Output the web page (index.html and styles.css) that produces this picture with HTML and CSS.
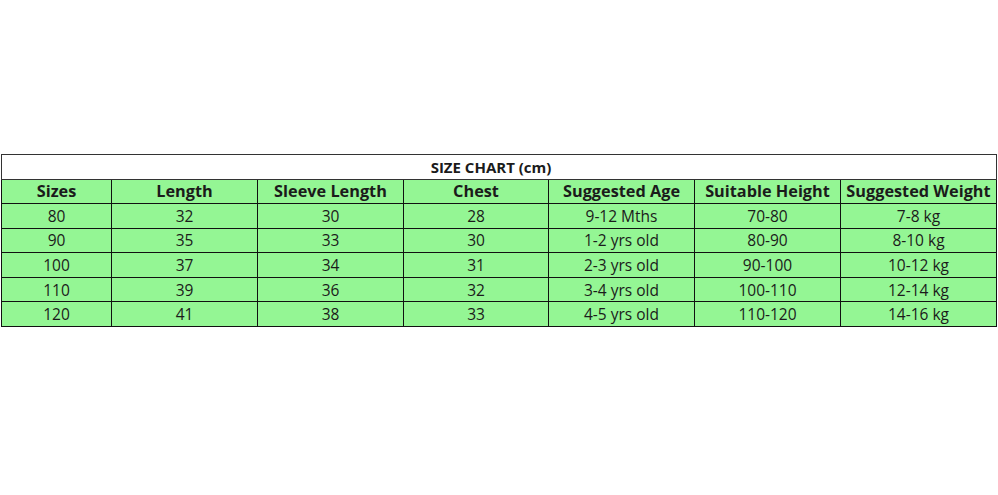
FILE: index.html
```html
<!DOCTYPE html>
<html>
<head>
<meta charset="utf-8">
<link rel="stylesheet" href="styles.css">
</head>
<body>
<div class="page">
<table class="chart">
<colgroup>
<col class="c1"><col class="c2"><col class="c3"><col class="c4"><col class="c5"><col class="c6"><col class="c7">
</colgroup>
<tr class="title"><td colspan="7">SIZE CHART (cm)</td></tr>
<tr class="head"><th>Sizes</th><th>Length</th><th>Sleeve Length</th><th>Chest</th><th>Suggested Age</th><th>Suitable Height</th><th>Suggested Weight</th></tr>
<tr><td>80</td><td>32</td><td>30</td><td>28</td><td>9-12 Mths</td><td>70-80</td><td>7-8 kg</td></tr>
<tr><td>90</td><td>35</td><td>33</td><td>30</td><td>1-2 yrs old</td><td>80-90</td><td>8-10 kg</td></tr>
<tr><td>100</td><td>37</td><td>34</td><td>31</td><td>2-3 yrs old</td><td>90-100</td><td>10-12 kg</td></tr>
<tr><td>110</td><td>39</td><td>36</td><td>32</td><td>3-4 yrs old</td><td>100-110</td><td>12-14 kg</td></tr>
<tr><td>120</td><td>41</td><td>38</td><td>33</td><td>4-5 yrs old</td><td>110-120</td><td>14-16 kg</td></tr>
</table>
</div>
</body>
</html>
```
FILE: styles.css
```css
html, body {
  margin: 0;
  padding: 0;
  background: #ffffff;
}
.page {
  width: 998px;
  height: 495px;
  padding-top: 154px;
  padding-left: 1px;
  box-sizing: border-box;
}
.chart {
  border-collapse: collapse;
  table-layout: fixed;
  width: 995px;
  font-family: "Open Sans", "Noto Sans", sans-serif;
  font-size: 15.5px;
  color: #1b1b1b;
}
.c1 { width: 110px; }
.c2 { width: 146px; }
.c3 { width: 146px; }
.c4 { width: 145px; }
.c5 { width: 146px; }
.c6 { width: 146px; }
.c7 { width: 156px; }
.chart td, .chart th {
  border: 1px solid #111111;
  text-align: center;
  padding: 0;
  height: 23.57px;
  line-height: 22px;
  background: #94f694;
  white-space: nowrap;
  overflow: hidden;
}
.chart th {
  font-weight: 700;
  font-size: 16.3px;
}
.chart .title td {
  background: #ffffff;
  font-weight: 700;
  font-size: 15px;
  border-color: #333333;
  padding-right: 16px;
}
```
